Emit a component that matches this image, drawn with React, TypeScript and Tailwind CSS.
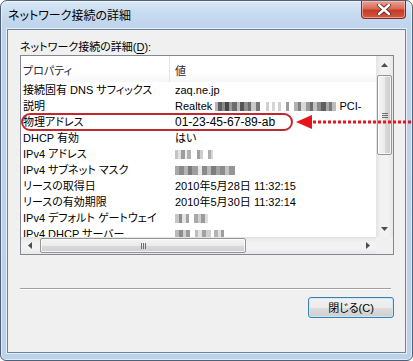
import React from "react";

type Block = [number, string];

// モザイク部分（ぼかし）
function Blur({ blocks }: { blocks: Block[] }) {
  return (
    <span className="inline-flex items-center h-[16px] align-top">
      {blocks.map(([w, c], i) => (
        <span key={i} className="inline-block h-[9px]" style={{ width: w, background: c }} />
      ))}
    </span>
  );
}

const descBlur: Block[] = [
  [3, "#b5b5b5"], [4, "#5e5e5e"], [3, "#8a8a8a"], [4, "#474747"], [3, "#9a9a9a"], [5, "#6c6c6c"],
  [3, "#bdbdbd"], [4, "#555"], [4, "#8f8f8f"], [3, "#6b6b6b"], [5, "#c8c8c8"], [4, "#777"],
  [6, "#fff"], [3, "#cfcfcf"], [3, "#fff"], [3, "#d5d5d5"], [3, "#fff"], [3, "#d0d0d0"], [5, "#fff"],
  [3, "#9c9c9c"], [5, "#fff"], [4, "#b0b0b0"], [3, "#808080"], [5, "#d8d8d8"], [4, "#9a9a9a"],
  [3, "#6d6d6d"], [4, "#c2c2c2"], [4, "#8a8a8a"], [5, "#5f5f5f"], [3, "#a8a8a8"], [3, "#7a7a7a"],
  [4, "#bcbcbc"],
];

const ipBlur: Block[] = [
  [3, "#c4c4c4"], [3, "#e2e2e2"], [4, "#9d9d9d"], [2, "#eee"], [4, "#b1b1b1"], [6, "#fff"],
  [3, "#a0a0a0"], [3, "#cfcfcf"], [5, "#fff"], [3, "#adadad"], [2, "#d9d9d9"],
];
const maskBlur: Block[] = [
  [4, "#a8a8a8"], [5, "#8b8b8b"], [4, "#b4b4b4"], [4, "#7c7c7c"], [6, "#9e9e9e"], [4, "#e8e8e8"],
  [5, "#8a8a8a"], [4, "#b8b8b8"], [5, "#7d7d7d"], [4, "#a2a2a2"], [5, "#8c8c8c"], [4, "#c2c2c2"],
  [6, "#959595"],
];
const gwBlur: Block[] = [
  [4, "#c6c6c6"], [3, "#8f8f8f"], [4, "#e3e3e3"], [3, "#a3a3a3"], [5, "#fff"], [4, "#a9a9a9"],
  [3, "#cfcfcf"], [4, "#9b9b9b"], [3, "#dedede"],
];
const dhcpBlur: Block[] = [
  [4, "#b9b9b9"], [4, "#8c8c8c"], [3, "#d1d1d1"], [4, "#9a9a9a"], [5, "#fff"], [3, "#bdbdbd"],
  [4, "#e3e3e3"], [4, "#a1a1a1"], [5, "#cfcfcf"], [3, "#fff"], [4, "#b3b3b3"], [3, "#e0e0e0"],
  [3, "#9f9f9f"],
];

const rows: { name: string; value: React.ReactNode }[] = [
  { name: "接続固有 DNS サフィックス", value: "zaq.ne.jp" },
  {
    name: "説明",
    value: (
      <>
        Realtek <Blur blocks={descBlur} /> PCI-
      </>
    ),
  },
  { name: "物理アドレス", value: <span className="text-[12px]">01-23-45-67-89-ab</span> },
  { name: "DHCP 有効", value: "はい" },
  { name: "IPv4 アドレス", value: <Blur blocks={ipBlur} /> },
  { name: "IPv4 サブネット マスク", value: <Blur blocks={maskBlur} /> },
  { name: "リースの取得日", value: "2010年5月28日 11:32:15" },
  { name: "リースの有効期限", value: "2010年5月30日 11:32:14" },
  { name: "IPv4 デフォルト ゲートウェイ", value: <Blur blocks={gwBlur} /> },
  { name: "IPv4 DHCP サーバー", value: <Blur blocks={dhcpBlur} /> },
];

function Arrow({ dir }: { dir: "up" | "down" | "left" | "right" }) {
  const pts = {
    up: "0,4 3.5,0 7,4",
    down: "0,0 3.5,4 7,0",
    left: "4,0 0,3.5 4,7",
    right: "0,0 4,3.5 0,7",
  }[dir];
  const vert = dir === "up" || dir === "down";
  return (
    <svg width={vert ? 7 : 4} height={vert ? 4 : 7} viewBox={vert ? "0 0 7 4" : "0 0 4 7"}>
      <polygon points={pts} fill="#4d4d4d" />
    </svg>
  );
}

export default function App() {
  const font = "font-['Liberation_Sans','Noto_Sans_CJK_JP',sans-serif] [font-feature-settings:'palt']";
  return (
    <div className={`relative w-[413px] h-[361px] overflow-hidden bg-white text-[11px] text-black ${font}`}>
      {/* ウィンドウ枠 */}
      <div className="flex flex-col w-[413px] h-[361px] rounded-t-[7px] rounded-b-[6px] border border-[#4f6077] bg-[linear-gradient(180deg,#dbe8f6_0px,#c6daef_14px,#bed4ec_28px,#bcd2ea_100%)] shadow-[inset_0_0_0_1px_rgba(255,255,255,0.55)]">
        {/* タイトルバー */}
        <div className="flex h-[28px] items-start justify-between">
          <div className="pl-[7px] pt-[7px] leading-[16px] text-[12px] text-black">ネットワーク接続の詳細</div>
          <div className="mr-[6px] flex h-[18px] w-[45px] items-center justify-center rounded-b-[4px] border border-t-0 border-[#7a302a] bg-[linear-gradient(180deg,#eba293_0%,#d86a57_45%,#c63a27_55%,#d35a40_100%)] shadow-[inset_0_0_0_1px_rgba(255,220,210,0.5)]">
            <svg width="14" height="11" viewBox="0 0 14 11">
              <path d="M2 1 L12 10 M12 1 L2 10" stroke="#5a2a26" strokeWidth="4.2" strokeLinecap="round" />
              <path d="M2 1 L12 10 M12 1 L2 10" stroke="#ffffff" strokeWidth="2.4" strokeLinecap="round" />
            </svg>
          </div>
        </div>

        {/* クライアント領域 */}
        <div className="mx-[6px] flex h-[324px] flex-col border border-[#6e8299] bg-[#f0f0f0] shadow-[0_0_0_1px_#e6eef8]">
          <div className="pl-[12px] pt-[10px] leading-[15px]">
            ネットワーク接続の詳細(<span className="underline underline-offset-2">D</span>):
          </div>

          {/* リストビュー */}
          <div className="ml-[12px] flex h-[200px] w-[374px] flex-col border border-[#828790] bg-white">
            <div className="flex h-[181px]">
              <div className="flex-1 overflow-hidden">
                <div className="flex h-[26px] items-start bg-[linear-gradient(180deg,#ffffff_0%,#ffffff_60%,#f6f7f9_100%)] pt-[8px] leading-[15px] text-[#1e2a38]">
                  <div className="w-[148px] pl-[2px]">プロパティ</div>
                  <div className="-mt-[8px] h-[26px] w-px bg-[#e2e6eb]" />
                  <div className="pl-[5px]">値</div>
                </div>
                {rows.map((r) => (
                  <div key={r.name} className="flex h-[16px] whitespace-nowrap leading-[16px]">
                    <div className="w-[149px] shrink-0 pl-[2px]">{r.name}</div>
                    <div className="pl-[5px]">{r.value}</div>
                  </div>
                ))}
              </div>
              {/* 縦スクロールバー */}
              <div className="flex w-[17px] flex-col items-center bg-[linear-gradient(90deg,#e4e4e4_0%,#f2f2f2_30%,#f2f2f2_70%,#e8e8e8_100%)]">
                <div className="flex h-[17px] w-full items-center justify-center">
                  <Arrow dir="up" />
                </div>
                <div className="mt-[2px] flex h-[80px] w-[15px] items-center justify-center rounded-[2px] border border-[#959595] bg-[linear-gradient(90deg,#f4f4f4_0%,#ebebeb_50%,#d9d9d9_51%,#cfcfcf_100%)] shadow-[inset_0_0_0_1px_rgba(255,255,255,0.7)]">
                  <div className="flex flex-col gap-[1px]">
                    <div className="h-px w-[6px] bg-[#6d6d6d]" />
                    <div className="h-px w-[6px] bg-[#6d6d6d]" />
                    <div className="h-px w-[6px] bg-[#6d6d6d]" />
                  </div>
                </div>
                <div className="flex-1" />
                <div className="flex h-[17px] w-full items-center justify-center">
                  <Arrow dir="down" />
                </div>
              </div>
            </div>
            <div className="flex h-[17px]">
              {/* 横スクロールバー */}
              <div className="flex flex-1 items-center bg-[linear-gradient(180deg,#e4e4e4_0%,#f2f2f2_30%,#f2f2f2_70%,#e8e8e8_100%)]">
                <div className="flex h-full w-[17px] items-center justify-center">
                  <Arrow dir="left" />
                </div>
                <div className="ml-[2px] flex h-[15px] w-[206px] items-center justify-center rounded-[2px] border border-[#959595] bg-[linear-gradient(180deg,#f4f4f4_0%,#ebebeb_50%,#d9d9d9_51%,#cfcfcf_100%)] shadow-[inset_0_0_0_1px_rgba(255,255,255,0.7)]">
                  <div className="flex gap-[1px]">
                    <div className="h-[6px] w-px bg-[#6d6d6d]" />
                    <div className="h-[6px] w-px bg-[#6d6d6d]" />
                    <div className="h-[6px] w-px bg-[#6d6d6d]" />
                  </div>
                </div>
                <div className="flex-1" />
                <div className="flex h-full w-[17px] items-center justify-center">
                  <Arrow dir="right" />
                </div>
              </div>
              <div className="w-[17px] bg-[#f0f0f0]" />
            </div>
          </div>

          {/* 区切り線 */}
          <div className="ml-[12px] mt-[33px] h-px w-[371px] bg-[#a0a0a0]" />
          <div className="ml-[12px] h-px w-[371px] bg-white" />

          <div className="flex justify-end pr-[11px] pt-[7px]">
            <button className="flex h-[21px] w-[86px] items-center justify-center rounded-[3px] border border-[#3c7fb1] bg-[linear-gradient(180deg,#f2f2f2_0%,#ebebeb_50%,#dddddd_51%,#cfcfcf_100%)] leading-[16px] text-black shadow-[inset_0_0_0_1px_rgba(198,232,252,0.9)]">
              閉じる(C)
            </button>
          </div>
        </div>
      </div>

      {/* 注釈（赤丸と矢印） */}
      <div className="absolute left-[21px] top-[113px] h-[18px] w-[272px] rounded-[9px] border-2 border-[#c1272d]" />
      <svg className="absolute left-[296px] top-[114px]" width="117" height="16" viewBox="0 0 117 16">
        <polygon points="0,8 16,1 16,15" fill="#e8141b" />
        <line x1="17" y1="8" x2="117" y2="8" stroke="#e8141b" strokeWidth="3" strokeDasharray="3 2" />
      </svg>
    </div>
  );
}
